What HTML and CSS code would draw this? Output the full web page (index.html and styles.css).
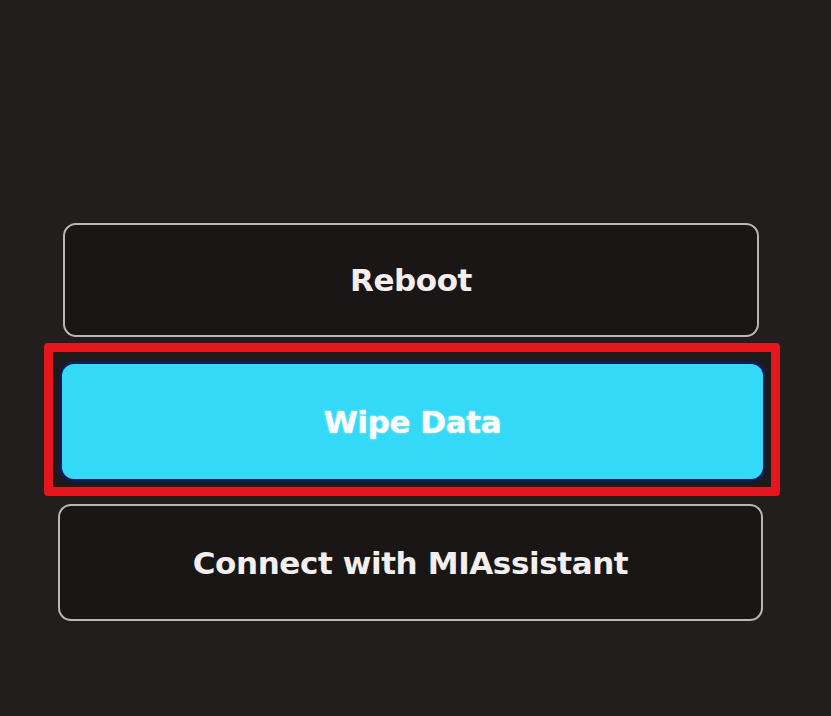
FILE: index.html
```html
<!DOCTYPE html>
<html lang="en">
<head>
<meta charset="utf-8">
<title>Recovery</title>
<link rel="stylesheet" href="styles.css">
</head>
<body>
<main class="screen">
  <p class="heading">Mi-Recovery 3.0 happy ready</p>
  <nav class="menu">
    <button class="option option-reboot">Reboot</button>
    <div class="focus-ring">
      <button class="option option-active">Wipe Data</button>
    </div>
    <button class="option option-connect">Connect with MIAssistant</button>
  </nav>
</main>
</body>
</html>
```

FILE: styles.css
```css
html, body {
  margin: 0;
  padding: 0;
  background: #221e1d;
}

.screen {
  width: 831px;
  height: 716px;
  overflow: hidden;
  display: flex;
  flex-direction: column;
  font-family: "DejaVu Sans", "Noto Sans", sans-serif;
}

/* Title line sits mostly above the top edge; only its descenders peek in */
.heading {
  margin: -37px 0 0 0;
  height: 40px;
  line-height: 40px;
  text-align: center;
  font-size: 29px;
  font-weight: 700;
  color: #e8e4e4;
}

.menu {
  display: flex;
  flex-direction: column;
  padding-top: 220px;
}

.option {
  display: flex;
  align-items: center;
  justify-content: center;
  box-sizing: border-box;
  font-family: inherit;
  font-size: 31px;
  font-weight: 700;
  letter-spacing: -0.4px;
  color: #f3efef;
  background: #1a1616;
  border: 2px solid #b9b6b6;
  border-radius: 13px;
  padding: 0;
}

.option-reboot {
  height: 114px;
  margin: 0 72px 0 63px;
}

.focus-ring {
  margin: 6px 51px 0 44px;
  height: 153px;
  box-sizing: border-box;
  border: 9px solid #e4161e;
  border-radius: 4px;
  padding: 12px 8px 8px 9px;
  background: #1d1a1a;
}

.option-active {
  width: 100%;
  height: 115px;
  background: #35d9f8;
  border: none;
  border-radius: 12px;
  box-shadow: 0 0 0 3px #0e1c5c;
  color: #fbfdff;
  text-shadow: 0 0 2px rgba(255, 255, 255, 0.8);
}

.option-connect {
  height: 117px;
  margin: 8px 68px 0 58px;
}
```
